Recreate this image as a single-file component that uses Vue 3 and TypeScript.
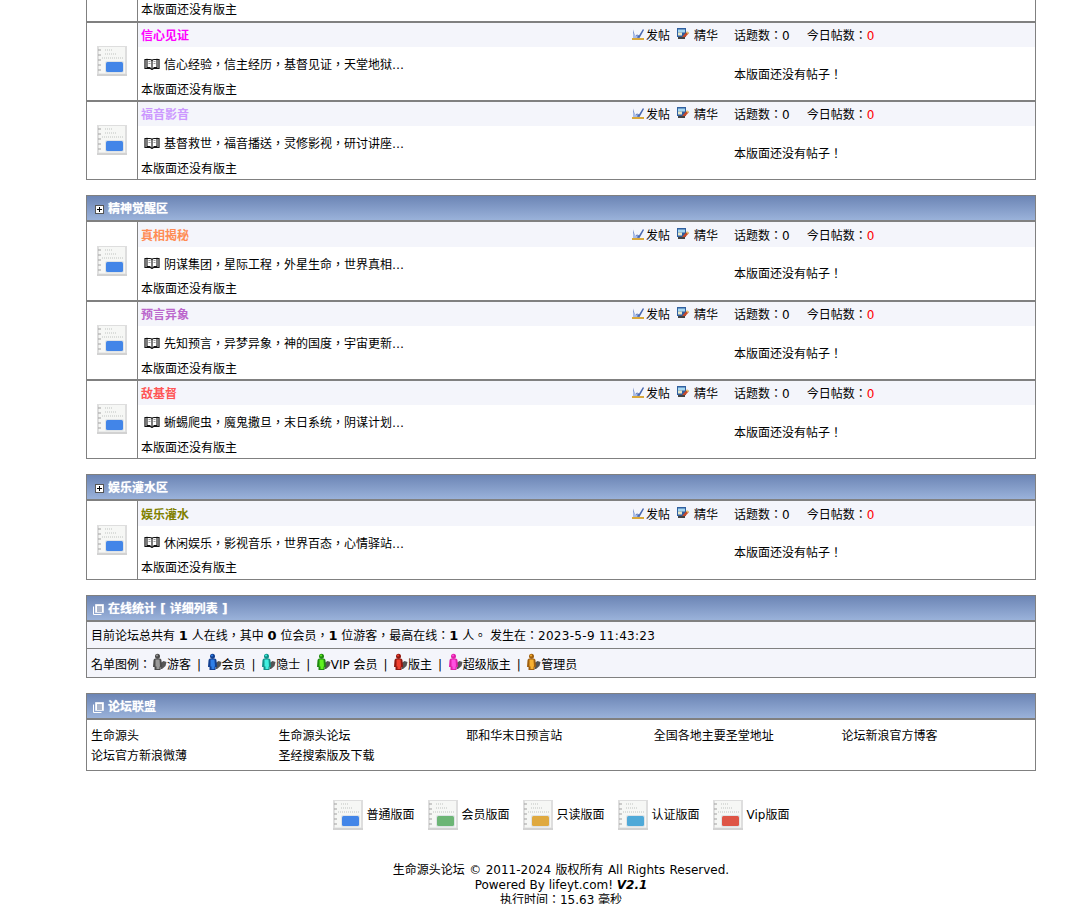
<template>
  <div class="page">
    <div class="forum">
      <div class="section">
        <div class="cut-row">
          <div class="side"></div>
          <div class="cut-text">本版面还没有版主</div>
        </div>
        <div v-for="b in firstBoards" :key="b.name" class="board">
          <div class="side">
            <svg class="note" viewBox="0 0 30 30"><use href="#note-base" /><rect x="9" y="16" width="17" height="10" rx="1.5" fill="#4285e8" /></svg>
          </div>
          <div class="main">
            <div class="board-head">
              <span class="board-name" :style="{ color: b.color }">{{ b.name }}</span>
              <span class="act act-post">
                <svg class="ico" viewBox="0 0 12 12"><use href="#ico-post" /></svg>发帖
              </span>
              <span class="act act-best">
                <svg class="ico" viewBox="0 0 12 12"><use href="#ico-best" /></svg>精华
              </span>
              <span class="stats">话题数：0<span class="today">今日帖数：<em>0</em></span></span>
            </div>
            <div class="board-body">
              <div class="desc">
                <svg class="book" viewBox="0 0 16 12"><use href="#ico-book" /></svg>
                <span>{{ b.desc }}</span>
              </div>
              <div class="empty">本版面还没有帖子！</div>
            </div>
            <div class="owner">本版面还没有版主</div>
          </div>
        </div>
      </div>

      <div v-for="s in sections" :key="s.title" class="section">
        <div class="sec-head">
          <svg class="plus" viewBox="0 0 9 9"><rect x=".5" y=".5" width="8" height="8" fill="#fff" stroke="#555" /><path d="M2 4.500h5M4.500 2v5" stroke="#000" /></svg>
          {{ s.title }}
        </div>
        <div v-for="(b, i) in s.boards" :key="b.name" class="board" :class="{ first: i === 0 }">
          <div class="side">
            <svg class="note" viewBox="0 0 30 30"><use href="#note-base" /><rect x="9" y="16" width="17" height="10" rx="1.5" fill="#4285e8" /></svg>
          </div>
          <div class="main">
            <div class="board-head">
              <span class="board-name" :style="{ color: b.color }">{{ b.name }}</span>
              <span class="act act-post">
                <svg class="ico" viewBox="0 0 12 12"><use href="#ico-post" /></svg>发帖
              </span>
              <span class="act act-best">
                <svg class="ico" viewBox="0 0 12 12"><use href="#ico-best" /></svg>精华
              </span>
              <span class="stats">话题数：0<span class="today">今日帖数：<em>0</em></span></span>
            </div>
            <div class="board-body">
              <div class="desc">
                <svg class="book" viewBox="0 0 16 12"><use href="#ico-book" /></svg>
                <span>{{ b.desc }}</span>
              </div>
              <div class="empty">本版面还没有帖子！</div>
            </div>
            <div class="owner">本版面还没有版主</div>
          </div>
        </div>
      </div>

      <div class="section">
        <div class="sec-head">
          <svg class="doc" viewBox="0 0 11 11"><path d="M2.500.5h8v8h-8z" fill="#fff" stroke="#e8ecf5" /><path d="M.5 2.500v8h8" fill="none" stroke="#fff" /><path d="M4 3h5M4 5h5M4 7h5" stroke="#5a6f98" /></svg>
          在线统计 [ 详细列表 ]
        </div>
        <div class="stat-line">目前论坛总共有 <b>1</b> 人在线，其中 <b>0</b> 位会员，<b>1</b> 位游客，最高在线：<b>1</b> 人。 发生在：<span class="when">2023-5-9 11:43:23</span></div>
        <div class="stat-line legend">
          <span class="legend-name">名单图例：</span>
          <template v-for="(u, i) in users" :key="u.label">
            <span v-if="i > 0" class="sep">|</span>
            <span class="user">
              <svg class="person" viewBox="0 0 15 18">
                <path d="M8.500 10l3-2 3 1-1 4-3.500 3h-1.500z" fill="#555" />
                <circle cx="5.500" cy="3.200" r="2.500" :fill="u.dark" />
                <path d="M1.500 7.500q0-2.300 4-2.300t4 2.300l.5 6.500H8.500v3h-6v-3H1z" :fill="u.dark" />
                <path d="M3.500 6.500h4l.5 7H7.500V16h-3v-2.500H3.500z" :fill="u.color" />
                <circle cx="5" cy="2.600" r="1" :fill="u.color" />
              </svg>{{ u.label }}
            </span>
          </template>
        </div>
      </div>

      <div class="section">
        <div class="sec-head">
          <svg class="doc" viewBox="0 0 11 11"><path d="M2.500.5h8v8h-8z" fill="#fff" stroke="#e8ecf5" /><path d="M.5 2.500v8h8" fill="none" stroke="#fff" /><path d="M4 3h5M4 5h5M4 7h5" stroke="#5a6f98" /></svg>
          论坛联盟
        </div>
        <div class="links">
          <span v-for="l in links" :key="l">{{ l }}</span>
        </div>
      </div>

      <div class="kinds">
        <span v-for="k in kinds" :key="k.label" class="kind">
          <svg class="note" viewBox="0 0 30 30"><use href="#note-base" /><rect x="9" y="16" width="17" height="10" rx="1.5" :fill="k.color" /></svg>
          {{ k.label }}
        </span>
      </div>

      <div class="footer">
        <div class="copy">生命源头论坛 © 2011-2024 版权所有 All Rights Reserved.</div>
        <div>Powered By lifeyt.com! <b><i>V2.1</i></b></div>
        <div>执行时间：15.63 毫秒</div>
      </div>
    </div>

    <svg width="0" height="0" class="defs">
      <defs>
        <g id="note-base">
          <rect x="0" y="0" width="30" height="30" fill="#dedede" />
          <rect x="2" y="1" width="26" height="26.500" fill="#f6f7f5" />
          <rect x="0" y="28" width="30" height="2" fill="#d2d2d2" />
          <path d="M1 4h3M1 9h3M1 14h3M1 19h3M1 24h3" stroke="#a0a0a0" stroke-width="1.200" />
          <path d="M8 4h7M8 8h11M5 12h21" stroke="#bfc3c0" stroke-dasharray="1 1" />
          <rect x="8" y="15" width="19" height="12" rx="2" fill="#dfe3e6" />
        </g>
        <g id="ico-post">
          <path d="M1 1.500v8h2.500z" fill="#7f97d0" />
          <path d="M2 9.500l3 -3 2 1 4-6.500 1 1-4.500 8z" fill="#4a68b0" />
          <path d="M1 5l3 3 2-1-1 3H1z" fill="#a8bce8" />
          <rect x="0" y="10" width="12" height="2" fill="#d9a83c" />
        </g>
        <g id="ico-best">
          <rect x="0" y="0" width="9" height="9" fill="#2f5fa0" />
          <rect x="1" y="1.500" width="7" height="3" fill="#a8d8f0" />
          <rect x="1" y="4.500" width="4" height="3" fill="#e8e8c8" />
          <path d="M5 9l5-5.500 2 1.500-5 5.500z" fill="#c84a28" />
          <path d="M10 3.500l2 1.500-1 1-2-1.500z" fill="#e8d070" />
          <rect x="1" y="9" width="7" height="2" fill="#444" />
        </g>
        <g id="ico-book">
          <path d="M1 1.500h5q2 0 2 1.500 0-1.500 2-1.500h5v9H9.500L8 11.500 6.500 10.500H1z" fill="#fff" stroke="#111" stroke-width="1.200" />
          <path d="M8 3v8M3 0.800v8.700h3.500M13 0.800v8.700H9.500" fill="none" stroke="#111" stroke-width="1.100" />
          <path d="M4.500 3.500h2M4.500 5.500h2M9.500 3.500h2M9.500 5.500h2" stroke="#777" stroke-width=".7" />
        </g>
      </defs>
    </svg>
  </div>
</template>

<script setup lang="ts">
interface Board {
  name: string
  color: string
  desc: string
}

const firstBoards: Board[] = [
  { name: '信心见证', color: '#ff00ff', desc: '信心经验，信主经历，基督见证，天堂地狱…' },
  { name: '福音影音', color: '#cc99ff', desc: '基督救世，福音播送，灵修影视，研讨讲座…' }
]

const sections: { title: string; boards: Board[] }[] = [
  {
    title: '精神觉醒区',
    boards: [
      { name: '真相揭秘', color: '#ff8c55', desc: '阴谋集团，星际工程，外星生命，世界真相…' },
      { name: '预言异象', color: '#bb66cc', desc: '先知预言，异梦异象，神的国度，宇宙更新…' },
      { name: '敌基督', color: '#ff5555', desc: '蜥蜴爬虫，魔鬼撒旦，末日系统，阴谋计划…' }
    ]
  },
  {
    title: '娱乐灌水区',
    boards: [{ name: '娱乐灌水', color: '#808000', desc: '休闲娱乐，影视音乐，世界百态，心情驿站…' }]
  }
]

const users = [
  { label: '游客', color: '#9a9a9a', dark: '#4a4a4a' },
  { label: '会员', color: '#2f7fe8', dark: '#123f90' },
  { label: '隐士', color: '#40f0e0', dark: '#109088' },
  { label: 'VIP 会员', color: '#60f020', dark: '#208a10' },
  { label: '版主', color: '#f04030', dark: '#901810' },
  { label: '超级版主', color: '#ff50e0', dark: '#e020a8' },
  { label: '管理员', color: '#f8b030', dark: '#a06010' }
]

const links = [
  '生命源头',
  '生命源头论坛',
  '耶和华末日预言站',
  '全国各地主要圣堂地址',
  '论坛新浪官方博客',
  '论坛官方新浪微薄',
  '圣经搜索版及下载'
]

const kinds = [
  { label: '普通版面', color: '#4285e8' },
  { label: '会员版面', color: '#6cb575' },
  { label: '只读版面', color: '#dfa93f' },
  { label: '认证版面', color: '#4fa9d8' },
  { label: 'Vip版面', color: '#de5445' }
]
</script>

<style>
html,
body {
  margin: 0;
  background: #fff;
  overflow: hidden;
}
</style>

<style scoped>
.page {
  height: 904px;
  overflow: hidden;
  font: 12px/18px Verdana, "DejaVu Sans", "Noto Sans CJK TC", sans-serif;
  color: #000;
}

.forum {
  width: 950px;
  margin-left: 86px;
}

.section {
  border: 1px solid #808080;
  margin-bottom: 15px;
  background: #fff;
}

.section:first-child {
  border-top: 0;
}

.defs {
  position: absolute;
}

.cut-row {
  display: flex;
  height: 21px;
}

.cut-text {
  padding: 1px 0 0 3px;
}

.side {
  width: 50px;
  flex: none;
  border-right: 1px solid #808080;
  display: flex;
  align-items: center;
  justify-content: center;
}

.note {
  width: 30px;
  height: 30px;
  flex: none;
}

.side .note {
  margin-top: -2px;
}

.first .side .note {
  margin-top: 0;
}

.board {
  display: flex;
  height: 77px;
  border-top: 2px solid #808080;
}

.board.first {
  border-top: 0;
  height: 78px;
}

.main {
  flex: 1;
  min-width: 0;
}

.board-head {
  display: flex;
  align-items: center;
  height: 24px;
  padding: 1px 0 0 3px;
  box-sizing: border-box;
  background: #f4f5fb;
}

.first .board-head {
  height: 25px;
  padding-top: 3px;
}

.board-name {
  flex: 1;
  font-weight: bold;
}

.act {
  display: inline-flex;
  align-items: center;
  white-space: nowrap;
}

.ico {
  width: 12px;
  height: 12px;
  margin: -4px 2px 0 0;
}

.act-post {
  margin-right: 7px;
}

.act-best {
  margin-right: 16px;
}

.act-best .ico {
  margin-right: 5px;
}

.stats {
  width: 301px;
  white-space: nowrap;
}

.today {
  margin-left: 17px;
}

.today em {
  font-style: normal;
  color: #f00;
}

.board-body {
  display: flex;
  height: 36px;
}

.first .board-body {
  height: 35px;
}

.desc {
  flex: 1;
  display: flex;
  align-items: center;
  padding-left: 6px;
}

.book {
  width: 16px;
  height: 12px;
  margin: -3px 4px 0 0;
}

.empty {
  width: 301px;
  padding-top: 19px;
  flex: none;
}

.first .empty {
  padding-top: 18px;
}

.owner {
  line-height: 14px;
  padding-left: 3px;
  white-space: nowrap;
}

.sec-head {
  display: flex;
  align-items: center;
  height: 22px;
  padding: 2px 0 0 8px;
  border-bottom: 2px solid #808080;
  background: linear-gradient(#6c85b5, #9ab2da);
  color: #fff;
  font-weight: bold;
  text-shadow: 0 0 1px rgba(255, 255, 255, 0.7);
}

.plus {
  width: 9px;
  height: 9px;
  margin-right: 4px;
}

.doc {
  width: 11px;
  height: 11px;
  margin: 0 4px 0 -2px;
}

.stat-line {
  height: 26px;
  line-height: 28px;
  padding-left: 4px;
  background: #f4f5fb;
}

.stat-line b {
  font-size: 13px;
}

.when {
  letter-spacing: 0.3px;
}

.legend {
  height: 25px;
  padding-top: 3px;
  border-top: 1px solid #808080;
  display: flex;
  align-items: center;
}

.legend-name {
  margin-right: 1px;
}

.sep {
  margin: 0 5.5px 0 6px;
}

.user {
  display: inline-flex;
  align-items: center;
  white-space: pre;
}

.person {
  width: 15px;
  height: 18px;
  margin-top: -5px;
}

.links {
  display: grid;
  grid-template-columns: repeat(5, 187.6px);
  padding: 6px 4px 4px;
  line-height: 20px;
}

.kinds {
  display: flex;
  justify-content: center;
  gap: 13px;
  margin-top: 29px;
}

.kind {
  display: inline-flex;
  align-items: center;
  gap: 4px;
}

.footer {
  margin-top: 33px;
  text-align: center;
  line-height: 15px;
}

.copy {
  word-spacing: 0.6px;
}
</style>
